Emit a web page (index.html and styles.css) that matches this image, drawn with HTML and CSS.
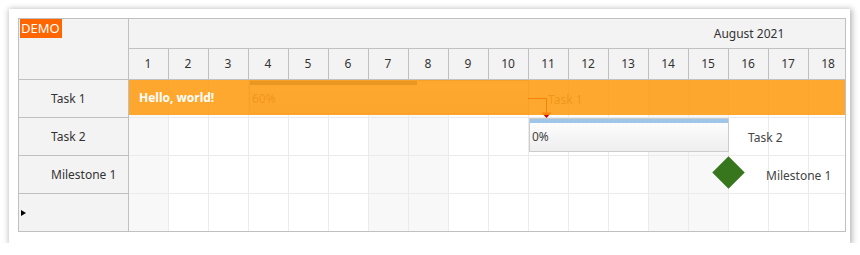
FILE: index.html
```html
<!DOCTYPE html>
<html>
<head>
<meta charset="utf-8">
<link rel="stylesheet" href="styles.css">
</head>
<body>
<div class="card">
  <div class="gantt">
    <div class="left">
      <div class="corner"><span class="demo">DEMO</span></div>
      <div class="rowhead">Task 1</div>
      <div class="rowhead">Task 2</div>
      <div class="rowhead">Milestone 1</div>
      <div class="rowhead newrow"><span class="tri"></span></div>
    </div>
    <div class="right">
      <div class="timeheader">
        <div class="monthrow"><div class="month">August 2021</div></div>
        <div class="dayrow">
          <div class="day">1</div><div class="day">2</div><div class="day">3</div><div class="day">4</div><div class="day">5</div><div class="day">6</div><div class="day">7</div><div class="day">8</div><div class="day">9</div><div class="day">10</div><div class="day">11</div><div class="day">12</div><div class="day">13</div><div class="day">14</div><div class="day">15</div><div class="day">16</div><div class="day">17</div><div class="day">18</div>
        </div>
      </div>
      <div class="body">
        <div class="grid">
          <div class="cell we"></div><div class="cell"></div><div class="cell"></div><div class="cell"></div><div class="cell"></div><div class="cell"></div><div class="cell we"></div><div class="cell we"></div><div class="cell"></div><div class="cell"></div><div class="cell"></div><div class="cell"></div><div class="cell"></div><div class="cell we"></div><div class="cell we"></div><div class="cell"></div><div class="cell"></div><div class="cell"></div>
          <div class="cell we"></div><div class="cell"></div><div class="cell"></div><div class="cell"></div><div class="cell"></div><div class="cell"></div><div class="cell we"></div><div class="cell we"></div><div class="cell"></div><div class="cell"></div><div class="cell"></div><div class="cell"></div><div class="cell"></div><div class="cell we"></div><div class="cell we"></div><div class="cell"></div><div class="cell"></div><div class="cell"></div>
          <div class="cell we"></div><div class="cell"></div><div class="cell"></div><div class="cell"></div><div class="cell"></div><div class="cell"></div><div class="cell we"></div><div class="cell we"></div><div class="cell"></div><div class="cell"></div><div class="cell"></div><div class="cell"></div><div class="cell"></div><div class="cell we"></div><div class="cell we"></div><div class="cell"></div><div class="cell"></div><div class="cell"></div>
          <div class="cell we"></div><div class="cell"></div><div class="cell"></div><div class="cell"></div><div class="cell"></div><div class="cell"></div><div class="cell we"></div><div class="cell we"></div><div class="cell"></div><div class="cell"></div><div class="cell"></div><div class="cell"></div><div class="cell"></div><div class="cell we"></div><div class="cell we"></div><div class="cell"></div><div class="cell"></div><div class="cell"></div>
        </div>

        <div class="task task1">
          <div class="progress" style="width:60%"></div>
          <div class="tasktext">60%</div>
          <div class="tasklabel">Task 1</div>
        </div>
        <div class="task task2">
          <div class="progress empty" style="width:100%"></div>
          <div class="tasktext">0%</div>
          <div class="tasklabel">Task 2</div>
        </div>
        <div class="milestone"><div class="diamond"></div><div class="mslabel">Milestone 1</div></div>

        <svg class="link" width="716" height="152" viewBox="0 0 716 152">
          <polyline points="399,18.5 417.5,18.5 417.5,33" fill="none" stroke="#cc0000" stroke-width="1"/>
          <polygon points="412.5,32.5 422.5,32.5 417.5,38" fill="#cc0000"/>
        </svg>

        <div class="band">Hello, world!</div>
      </div>
    </div>
  </div>
</div>
</body>
</html>
```
FILE: styles.css
```css
html, body {
  margin: 0;
  padding: 0;
  background: #ffffff;
}
body {
  font-family: "Noto Sans", "Open Sans", sans-serif;
  font-size: 12px;
  color: #333333;
}
.card {
  margin: 9px 0 0 9px;
  width: 841px;
  height: 234px;
  box-sizing: border-box;
  padding: 9px 4px 11px 9px;
  background: #ffffff;
  box-shadow: 1px 1px 6px 1px rgba(0, 0, 0, 0.3);
}
.gantt {
  width: 828px;
  height: 214px;
  box-sizing: border-box;
  border: 1px solid #c0c0c0;
  display: flex;
  overflow: hidden;
  background: #ffffff;
}
.left {
  width: 110px;
  flex: 0 0 110px;
  box-sizing: border-box;
  border-right: 1px solid #c0c0c0;
  background: #f3f3f3;
  display: flex;
  flex-direction: column;
}
.corner {
  height: 61px;
  flex: 0 0 61px;
  box-sizing: border-box;
  border-bottom: 1px solid #c0c0c0;
  display: flex;
  align-items: flex-start;
}
.demo {
  margin-left: 1px;
  height: 19px;
  line-height: 19px;
  padding: 0 2px 0 1px;
  background: #ff6600;
  color: #ffffff;
  font-size: 13px;
}
.rowhead {
  height: 38px;
  flex: 0 0 38px;
  box-sizing: border-box;
  border-bottom: 1px solid #c0c0c0;
  display: flex;
  align-items: center;
  padding-left: 32px;
  color: #333333;
}
.rowhead.newrow {
  padding-left: 2px;
}
.tri {
  width: 0;
  height: 0;
  border-top: 3.5px solid transparent;
  border-bottom: 3.5px solid transparent;
  border-left: 5px solid #000000;
}
.right {
  flex: 1 1 auto;
  min-width: 0;
  overflow: hidden;
  display: flex;
  flex-direction: column;
}
.timeheader {
  background: #f3f3f3;
  flex: 0 0 61px;
}
.monthrow {
  height: 30px;
  box-sizing: border-box;
  border-bottom: 1px solid #c0c0c0;
  display: flex;
}
.month {
  width: 1240px;
  flex: 0 0 1240px;
  text-align: center;
  line-height: 29px;
  color: #333333;
}
.dayrow {
  height: 31px;
  box-sizing: border-box;
  border-bottom: 1px solid #c0c0c0;
  display: flex;
}
.day {
  width: 40px;
  flex: 0 0 40px;
  box-sizing: border-box;
  border-right: 1px solid #c0c0c0;
  text-align: center;
  line-height: 30px;
  padding-right: 1px;
  color: #333333;
}
.body {
  position: relative;
  flex: 1 1 auto;
}
.grid {
  display: grid;
  grid-template-columns: repeat(18, 40px);
  grid-auto-rows: 38px;
  width: 720px;
}
.cell {
  box-sizing: border-box;
  border-right: 1px solid #ebebeb;
  border-bottom: 1px solid #ebebeb;
  background: #ffffff;
}
.cell.we {
  background: #f8f8f8;
}
.task {
  position: absolute;
  height: 34px;
  box-sizing: border-box;
  border: 1px solid #cccccc;
  background: linear-gradient(#ffffff, #eeeeee);
}
.task1 {
  left: 120px;
  top: 0;
  width: 280px;
}
.task2 {
  left: 400px;
  top: 38px;
  width: 200px;
}
.progress {
  height: 4px;
  background: #6f8fae;
}
.progress.empty {
  background: #9fc5e8;
}
.tasktext {
  padding-left: 2px;
  line-height: 28px;
  color: #444444;
}
.task1 .tasktext {
  color: #8a8a8a;
}
.tasklabel {
  position: absolute;
  left: calc(100% + 20px);
  top: 2px;
  line-height: 34px;
  white-space: nowrap;
  color: #444444;
}
.task1 .tasklabel {
  color: #8a8a8a;
}
.milestone {
  position: absolute;
  left: 588px;
  top: 81px;
  height: 23px;
}
.diamond {
  width: 23px;
  height: 23px;
  background: #38761d;
  transform: rotate(45deg);
}
.mslabel {
  position: absolute;
  left: 49px;
  top: 0;
  line-height: 30px;
  white-space: nowrap;
  color: #444444;
}
.link {
  position: absolute;
  left: 0;
  top: 0;
}
.band {
  position: absolute;
  left: 0;
  top: 0;
  width: 100%;
  height: 35px;
  line-height: 35px;
  padding-left: 10px;
  box-sizing: border-box;
  background: rgba(255, 153, 10, 0.85);
  color: #ffffff;
  font-weight: bold;
  font-size: 12px;
}
```
